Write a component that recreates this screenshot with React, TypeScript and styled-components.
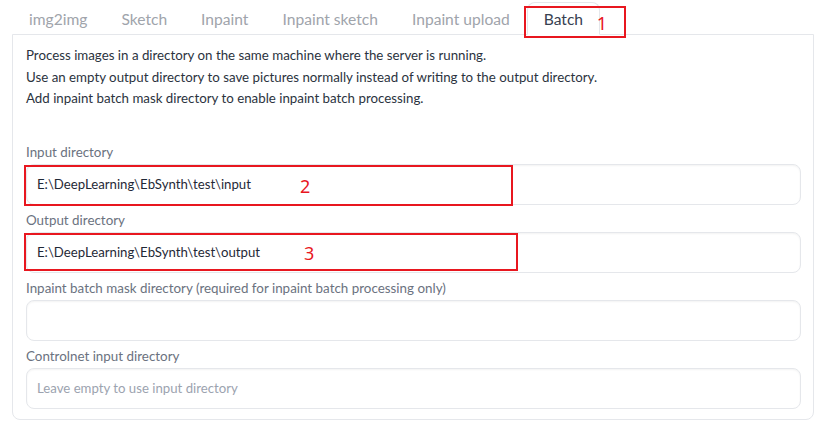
import React from "react";
import styled, { createGlobalStyle } from "styled-components";

const Global = createGlobalStyle`
  html, body { margin: 0; padding: 0; background: #ffffff; }
  body { font-family: "Lato", "Noto Sans", sans-serif; }
  * { box-sizing: border-box; }
`;

const Page = styled.div`
  position: relative;
  width: 819px;
  height: 421px;
  padding: 0 5px 0 12px;
  overflow: hidden;
`;

const TabBar = styled.div`
  display: flex;
  height: 35px;
  padding-top: 2px;
  margin-bottom: -1px;
`;

const Tab = styled.div<{ $active?: boolean }>`
  height: 33px;
  padding: 0 16px;
  display: flex;
  align-items: center;
  font-size: 15.6px;
  color: ${(p) => (p.$active ? "#374151" : "#a0a4ab")};
  border: 1px solid ${(p) => (p.$active ? "#e5e7eb" : "transparent")};
  border-bottom-color: ${(p) => (p.$active ? "#ffffff" : "transparent")};
  border-radius: 8px 8px 0 0;
  background: ${(p) => (p.$active ? "#ffffff" : "transparent")};
  position: relative;
  z-index: 1;
`;

const Panel = styled.div`
  border: 1px solid #e5e7eb;
  border-radius: 0 0 8px 8px;
  padding: 10px 12px 9px 13px;
  height: 386px;
`;

const Desc = styled.div`
  font-size: 13.3px;
  line-height: 21.5px;
  color: #2b3340;
  margin-bottom: 33px;
`;

const Field = styled.div`
  position: relative;
  display: flex;
  flex-direction: column;
  gap: 3px;
  margin-bottom: 6px;
`;

const Label = styled.div`
  font-size: 13.4px;
  line-height: 18px;
  color: #6b7280;
`;

const InputBox = styled.div<{ $placeholder?: boolean }>`
  position: relative;
  height: 41px;
  border: 1px solid #e5e7eb;
  border-radius: 8px;
  box-shadow: inset 0 1px 2px rgba(0, 0, 0, 0.05);
  padding: 0 10px;
  display: flex;
  align-items: center;
  font-size: 13.2px;
  color: ${(p) => (p.$placeholder ? "#9ca3af" : "#1f2937")};
`;

const Marker = styled.div<{ $numX: number }>`
  position: absolute;
  border: 2px solid #e8171f;
  pointer-events: none;
  display: flex;
  align-items: center;
  padding-left: ${(p) => p.$numX}px;
  padding-top: 2px;
  color: #e8171f;
  font-size: 18px;
  line-height: 18px;
  font-family: "Noto Sans", sans-serif;
  font-weight: 400;
`;

const tabs = ["img2img", "Sketch", "Inpaint", "Inpaint sketch", "Inpaint upload", "Batch"];

type FieldDef = {
  label: string;
  value?: string;
  placeholder?: string;
  mark?: { n: string; w: number; h: number; numX: number };
};

const fields: FieldDef[] = [
  {
    label: "Input directory",
    value: "E:\\DeepLearning\\EbSynth\\test\\input",
    mark: { n: "2", w: 489, h: 41, numX: 274 },
  },
  {
    label: "Output directory",
    value: "E:\\DeepLearning\\EbSynth\\test\\output",
    mark: { n: "3", w: 494, h: 38, numX: 278 },
  },
  { label: "Inpaint batch mask directory (required for inpaint batch processing only)" },
  { label: "Controlnet input directory", placeholder: "Leave empty to use input directory" },
];

export default function App() {
  return (
    <Page>
      <Global />
      <TabBar>
        {tabs.map((t) => (
          <Tab key={t} $active={t === "Batch"}>
            {t}
            {t === "Batch" && (
              <Marker $numX={71} style={{ left: -4, top: 3, width: 102, height: 32 }}>
                1
              </Marker>
            )}
          </Tab>
        ))}
      </TabBar>
      <Panel>
        <Desc>
          <div>Process images in a directory on the same machine where the server is running.</div>
          <div>Use an empty output directory to save pictures normally instead of writing to the output directory.</div>
          <div>Add inpaint batch mask directory to enable inpaint batch processing.</div>
        </Desc>
        {fields.map((f) => (
          <Field key={f.label}>
            <Label>{f.label}</Label>
            <InputBox $placeholder={!!f.placeholder}>
              {f.value ?? f.placeholder ?? ""}
              {f.mark && (
                <Marker $numX={f.mark.numX} style={{ left: -3, top: 0, width: f.mark.w, height: f.mark.h }}>
                  {f.mark.n}
                </Marker>
              )}
            </InputBox>
          </Field>
        ))}
      </Panel>
    </Page>
  );
}
